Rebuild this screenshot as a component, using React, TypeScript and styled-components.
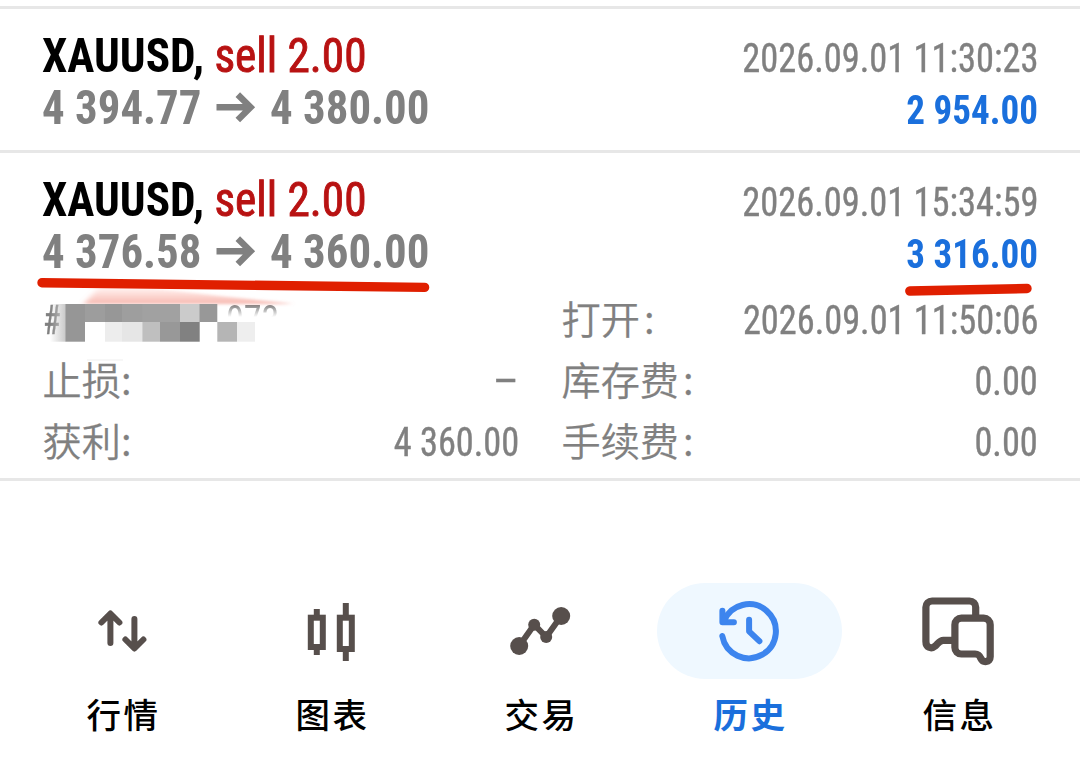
import React from "react";
import styled, { createGlobalStyle } from "styled-components";

const GlobalStyle = createGlobalStyle`
  * { box-sizing: border-box; }
  body { margin: 0; background: #fff; }
`;

const latin = `"Roboto Condensed", Roboto, sans-serif`;
const cjk = `"Noto Sans CJK SC", sans-serif`;

const Screen = styled.main`
  position: relative;
  display: flex;
  flex-direction: column;
  width: 1080px;
  height: 758px;
  overflow: hidden;
  padding-top: 6px;
  background: #fff;
  font-family: ${latin};
  color: #808080;
`;

const Deal = styled.section<{ $height: number; $last?: boolean }>`
  height: ${(p) => p.$height}px;
  padding: 21px 42px 0;
  border-top: 3px solid #e7e7e7;
  ${(p) => p.$last && "border-bottom: 3px solid #e7e7e7;"}
`;

const Summary = styled.div`
  display: flex;
  justify-content: space-between;
`;

const Column = styled.div<{ $end?: boolean }>`
  display: flex;
  flex-direction: column;
  align-items: ${(p) => (p.$end ? "flex-end" : "flex-start")};
  padding-top: ${(p) => (p.$end ? 3 : 0)}px;
`;

const Line = styled.div`
  display: flex;
  align-items: center;
  height: 52px;
  line-height: 52px;
`;

const Figure = styled.span<{
  $size: number;
  $bold?: boolean;
  $color?: string;
  $scale: number;
  $end?: boolean;
}>`
  display: inline-block;
  white-space: pre;
  font-size: ${(p) => p.$size}px;
  font-weight: ${(p) => (p.$bold ? 700 : 400)};
  color: ${(p) => p.$color || "#808080"};
  -webkit-text-stroke: ${(p) => (p.$bold ? 0 : 0.4)}px currentColor;
  transform: scaleX(${(p) => p.$scale});
  transform-origin: ${(p) => (p.$end ? "right" : "left")} center;
`;

const Volume = styled.span`
  font-weight: 400;
  color: #b81212;
  -webkit-text-stroke: 0.9px #b81212;
`;

const PriceBox = styled.div`
  display: flex;
  width: 174px;
`;

const Arrow = styled.svg`
  width: 40px;
  height: 32px;
  margin-right: 14px;
`;

const Details = styled.div`
  display: grid;
  grid-template-columns: 476px 476px;
  column-gap: 43px;
  grid-auto-rows: 61px;
  margin: 9px 0 0 1px;
`;

const Detail = styled.div`
  display: flex;
  justify-content: space-between;
  line-height: 61px;
`;

const Label = styled.span<{ $gap: number }>`
  margin-left: -0.5px;
  font-family: ${cjk};
  font-size: 39.2px;
  font-weight: 350;
  -webkit-text-stroke: 0.25px currentColor;
  height: 61px;
  line-height: 55px;

  i {
    font-style: normal;
    margin-left: ${(p) => p.$gap}px;
  }
`;

const Ticket = styled.div`
  display: flex;
`;

const TicketTail = styled.span`
  display: inline-block;
  height: 61px;
  margin-left: 161px;
  font-size: 40px;
  transform: scaleX(0.9);
  transform-origin: left center;
  mask-image: linear-gradient(to bottom, #000 15px, transparent 27px);
`;

const Markup = styled.svg`
  position: absolute;
  left: 0;
  top: 270px;
  width: 1080px;
  height: 100px;
  pointer-events: none;
`;

const TabBar = styled.nav`
  display: grid;
  grid-template-columns: repeat(5, 209px);
  margin-top: 102px;
  padding-left: 18px;
`;

const Tab = styled.div`
  display: flex;
  flex-direction: column;
  align-items: center;
`;

const Pill = styled.div<{ $active?: boolean }>`
  display: flex;
  justify-content: center;
  width: 185px;
  height: 96px;
  border-radius: 48px;
  background: ${(p) => (p.$active ? "#eff8ff" : "transparent")};
`;

const TabIcon = styled.svg<{ $active?: boolean }>`
  width: 96px;
  height: 96px;
  color: ${(p) => (p.$active ? "#3d85ee" : "#574f4c")};
  fill: none;
  stroke: currentColor;
  stroke-width: 6;
  stroke-linecap: round;
  stroke-linejoin: round;
`;

const TabLabel = styled.span<{ $active?: boolean }>`
  margin-top: 8px;
  padding-left: 2px;
  font-family: ${cjk};
  font-size: 34.5px;
  line-height: 52px;
  letter-spacing: 2.5px;
  font-weight: ${(p) => (p.$active ? 700 : 500)};
  color: ${(p) => (p.$active ? "#1a6fdc" : "#000")};
`;

const icons = {
  quotes: (
    <>
      <path d="M36 60V30.7M27 39.5L36 30.5L45 39.5" />
      <path d="M60 36V65.3M51 56.5L60 65.5L69 56.5" />
    </>
  ),
  charts: (
    <g strokeLinecap="butt" strokeLinejoin="miter">
      <rect x="27.4" y="34.7" width="12" height="29.3" />
      <path d="M33.4 26V33M33.4 66V72" />
      <rect x="56.4" y="34.7" width="12" height="31.3" />
      <path d="M62.4 20V33M62.4 68V78" />
    </g>
  ),
  trade: (
    <>
      <path d="M26.8 63L41.8 41.7L53.8 54L68.8 33" />
      <g fill="currentColor" stroke="none">
        <circle cx="26.8" cy="63" r="9" />
        <circle cx="41.8" cy="41.7" r="6" />
        <circle cx="53.8" cy="54" r="6" />
        <circle cx="68.8" cy="33" r="9" />
      </g>
    </>
  ),
  history: (
    <>
      <path d="M21 27.7V39.3H32.5" />
      <path d="M22.4 38.2A27 27 0 1 1 20.9 53" />
      <path d="M47.7 36.7V48.3L58 58.2" />
    </>
  ),
  messages: (
    <g strokeWidth="7.2">
      <path d="M65.3 34V24.2a6.2 6.2 0 0 0-6.2-6.2H21.7a6.2 6.2 0 0 0-6.2 6.2V58.5c0 6 5.2 8 9.3 4.5c3-2.7 4.4-5.7 8.2-5.7H43" />
      <path d="M51 35.2H73.3a6.5 6.5 0 0 1 6.5 6.5V73.8c0 5.6-7 6.4-9.4 1.6c-1.2-3-2.4-4.4-5.7-4.4H51a6.5 6.5 0 0 1-6.5-6.5V41.7a6.5 6.5 0 0 1 6.5-6.5z" />
    </g>
  ),
};

const tabs: { icon: keyof typeof icons; label: string; active?: boolean }[] = [
  { icon: "quotes", label: "行情" },
  { icon: "charts", label: "图表" },
  { icon: "trade", label: "交易" },
  { icon: "history", label: "历史", active: true },
  { icon: "messages", label: "信息" },
];

const topCells = [
  [65.3, 19.7, "#969696"],
  [85, 20, "#9d9d9d"],
  [105, 17, "#979797"],
  [122, 20.3, "#9e9e9e"],
  [142.3, 37.7, "#a1a1a1"],
  [180, 19.7, "#cbcbcb"],
  [199.7, 17.6, "#989898"],
] as const;

const bottomCells = [
  [65.3, 19.7, "#969696"],
  [105, 17, "#ededed"],
  [122, 20.3, "#e6e6e6"],
  [142.3, 17.7, "#bfbfbf"],
  [160, 20, "#989898"],
  [180, 19.7, "#818181"],
  [217.3, 19.7, "#b5b5b5"],
  [237, 18, "#eeeeee"],
] as const;

function DealSummary(p: { open: string; close: string; time: string; profit: string }) {
  return (
    <Summary>
      <Column>
        <Line>
          <Figure $size={48} $bold $color="#000" $scale={0.943}>
            {"XAUUSD, "}
            <Volume>sell 2.00</Volume>
          </Figure>
        </Line>
        <Line>
          <PriceBox>
            <Figure $size={48} $bold $scale={0.935}>{p.open}</Figure>
          </PriceBox>
          <Arrow viewBox="0 0 40 32" fill="none" stroke="#808080" strokeWidth="6.4">
            <path d="M0.5 15.2H35M21.8 2.6L34.6 15.2L21.8 28" />
          </Arrow>
          <Figure $size={48} $bold $scale={0.935}>{p.close}</Figure>
        </Line>
      </Column>
      <Column $end>
        <Line>
          <Figure $size={40} $scale={0.91} $end>{p.time}</Figure>
        </Line>
        <Line>
          <Figure $size={40} $bold $color="#1a6fdc" $scale={0.928} $end>{p.profit}</Figure>
        </Line>
      </Column>
    </Summary>
  );
}

function DetailItem(p: { label: string; value: string; gap?: number; scale?: number }) {
  return (
    <Detail>
      <Label $gap={p.gap ?? 0}>
        {p.label}
        <i>:</i>
      </Label>
      <Figure $size={40} $scale={p.scale ?? 0.908} $end>{p.value}</Figure>
    </Detail>
  );
}

export default function App() {
  return (
    <Screen>
      <GlobalStyle />
      <Deal $height={144}>
        <DealSummary open="4 394.77" close="4 380.00" time="2026.09.01 11:30:23" profit="2 954.00" />
      </Deal>
      <Deal $height={331} $last>
        <DealSummary open="4 376.58" close="4 360.00" time="2026.09.01 15:34:59" profit="3 316.00" />
        <Details>
          <Detail>
            <Ticket>
              <Figure $size={40} $scale={0.8}>#</Figure>
              <TicketTail>073</TicketTail>
            </Ticket>
          </Detail>
          <DetailItem label="打开" value="2026.09.01 11:50:06" gap={4} />
          <DetailItem label="止损" value="–" scale={1.14} />
          <DetailItem label="库存费" value="0.00" gap={4} />
          <DetailItem label="获利" value="4 360.00" />
          <DetailItem label="手续费" value="0.00" gap={4} />
        </Details>
      </Deal>

      <TabBar>
        {tabs.map((t) => (
          <Tab key={t.icon}>
            <Pill $active={t.active}>
              <TabIcon viewBox="0.6 0 96 96" $active={t.active}>{icons[t.icon]}</TabIcon>
            </Pill>
            <TabLabel $active={t.active}>{t.label}</TabLabel>
          </Tab>
        ))}
      </TabBar>

      <Markup viewBox="0 270 1080 100">
        <defs>
          <linearGradient id="glow" x1="0" y1="286" x2="0" y2="304" gradientUnits="userSpaceOnUse">
            <stop offset="0" stopColor="#ff8f80" stopOpacity="0.05" />
            <stop offset="1" stopColor="#f08a7c" stopOpacity="0.6" />
          </linearGradient>
          <linearGradient id="fade" x1="50" y1="0" x2="66" y2="0" gradientUnits="userSpaceOnUse">
            <stop offset="0" stopColor="#c8c8c8" stopOpacity="0" />
            <stop offset="1" stopColor="#c8c8c8" />
          </linearGradient>
          <filter id="soft" x="-10%" y="-50%" width="120%" height="200%">
            <feGaussianBlur stdDeviation="3 1.5" />
          </filter>
        </defs>
        <path d="M84 304L98 288H150L220 296L290 303.5V304Z" fill="url(#glow)" filter="url(#soft)" />
        <rect x="50" y="304" width="15.3" height="37.7" fill="url(#fade)" />
        <rect x="66" y="304" width="134" height="18" fill="#9e9e9e" />
        {topCells.map(([x, w, c]) => (
          <rect key={x} x={x} y="304" width={w} height="18" fill={c} />
        ))}
        {bottomCells.map(([x, w, c]) => (
          <rect key={x} x={x} y="322" width={w} height="19.7" fill={c} />
        ))}
        <rect x="87" y="359" width="36" height="2" fill="#f7f7f7" />
        <g stroke="#e01f00" strokeWidth="9.4" strokeLinecap="round">
          <path d="M42 282.7L424.6 287.4" />
          <path d="M909.8 291L1027 288.5" />
        </g>
      </Markup>
    </Screen>
  );
}
